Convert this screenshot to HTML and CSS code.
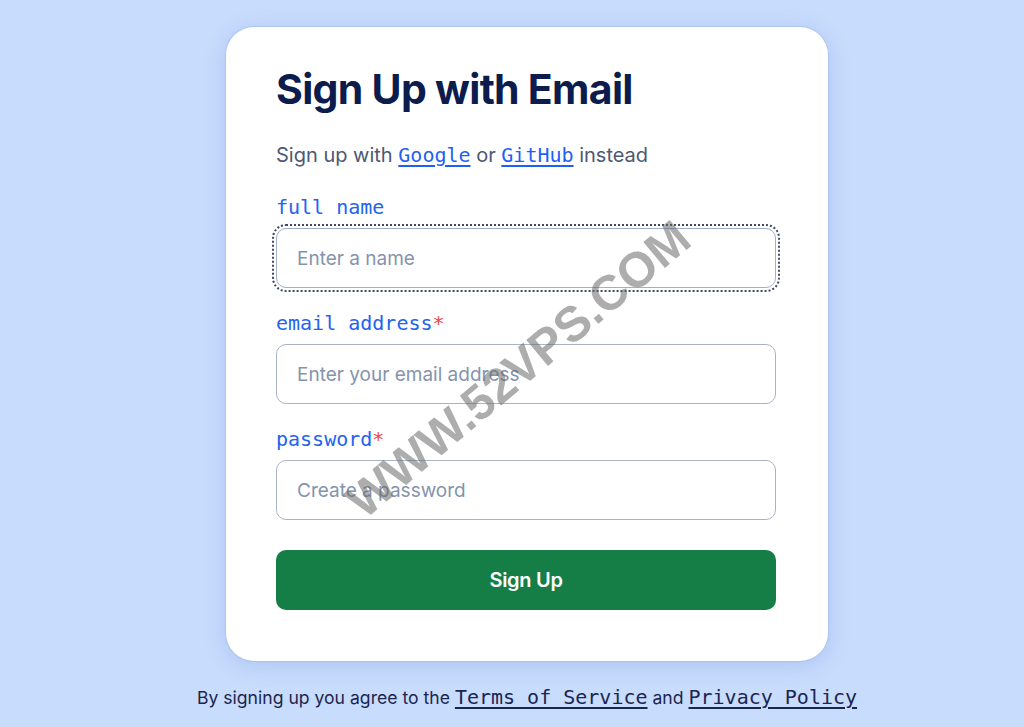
FILE: index.html
```html
<!DOCTYPE html>
<html lang="en">
<head>
<meta charset="utf-8">
<title>Sign Up with Email</title>
<link rel="stylesheet" href="styles.css">
</head>
<body>
<main class="page">
  <section class="card">
    <h1 class="title">Sign Up with Email</h1>
    <p class="alt">Sign up with <a class="code-link" href="#">Google</a> or <a class="code-link" href="#">GitHub</a> instead</p>
    <form class="form">
      <div class="field">
        <label class="label" for="name">full name</label>
        <input class="input input-focus" id="name" type="text" placeholder="Enter a name">
      </div>
      <div class="field">
        <label class="label" for="email">email address<span class="req">*</span></label>
        <input class="input" id="email" type="email" placeholder="Enter your email address">
      </div>
      <div class="field">
        <label class="label" for="pw">password<span class="req">*</span></label>
        <input class="input" id="pw" type="password" placeholder="Create a password">
      </div>
      <button class="submit" type="button">Sign Up</button>
    </form>
    <div class="watermark">WWW.52VPS.COM</div>
  </section>
  <p class="terms">By signing up you agree to the <a class="terms-link" href="#">Terms of Service</a> and <a class="terms-link" href="#">Privacy Policy</a></p>
</main>
</body>
</html>
```

FILE: styles.css
```css
html, body {
  margin: 0;
  padding: 0;
}
body {
  background: #c8dcfd;
  font-family: Inter, "Noto Sans", "Liberation Sans", sans-serif;
  min-height: 727px;
}
.page {
  display: flex;
  flex-direction: column;
  align-items: center;
  padding: 27px 0 0 30px;
}
.card {
  position: relative;
  width: 502px;
  padding: 38px 50px 51px 50px;
  background: #ffffff;
  border-radius: 28px;
  box-shadow: 0 0 0 1px rgba(150, 175, 220, 0.35), 0 4px 22px rgba(70, 110, 190, 0.22);
  overflow: hidden;
}
.title {
  margin: 0;
  font-size: 41px;
  line-height: 48px;
  font-weight: 700;
  letter-spacing: -0.7px;
  color: #0b1c4d;
}
.alt {
  margin: 27px 0 0 0;
  font-size: 20px;
  line-height: 30px;
  color: #4d5872;
}
.code-link {
  font-family: "DejaVu Sans Mono", "Liberation Mono", monospace;
  font-size: 20px;
  color: #1f5ff5;
  text-decoration: underline;
  text-underline-offset: 3px;
}
.form {
  display: flex;
  flex-direction: column;
  margin-top: 25px;
}
.field {
  display: flex;
  flex-direction: column;
  gap: 9px;
  margin-bottom: 23px;
}
.label {
  font-family: "DejaVu Sans Mono", "Liberation Mono", monospace;
  font-size: 20px;
  line-height: 24px;
  color: #2263f0;
}
.req {
  color: #ef4444;
}
.input {
  box-sizing: border-box;
  width: 500px;
  height: 60px;
  margin: 0;
  padding: 0 20px;
  border: 1px solid #a9b3c7;
  border-radius: 10px;
  background: #ffffff;
  font-family: Inter, "Noto Sans", sans-serif;
  font-size: 19px;
  color: #1f2937;
}
.input::placeholder {
  color: #8593ad;
}
.input-focus {
  border-color: #9fb0c8;
  outline: 2px dotted #3f4a63;
  outline-offset: 2px;
}
.submit {
  margin-top: 7px;
  width: 500px;
  height: 60px;
  border: 0;
  border-radius: 10px;
  background: #147e46;
  color: #ffffff;
  font-family: Inter, "Noto Sans", sans-serif;
  font-size: 20px;
  font-weight: 600;
  letter-spacing: -0.3px;
  cursor: pointer;
}
.watermark {
  position: absolute;
  left: 292px;
  top: 342px;
  transform: translate(-50%, -50%) rotate(-40deg);
  font-family: "Liberation Sans", Arial, sans-serif;
  font-weight: 700;
  font-size: 49px;
  color: rgba(105, 105, 105, 0.55);
  white-space: nowrap;
  pointer-events: none;
}
.terms {
  margin: 24px 0 0 0;
  font-size: 17.6px;
  line-height: 24px;
  color: #1b2550;
}
.terms-link {
  font-family: "DejaVu Sans Mono", "Liberation Mono", monospace;
  font-size: 20px;
  color: #1b2550;
  text-decoration: underline;
  text-underline-offset: 3px;
}
```
